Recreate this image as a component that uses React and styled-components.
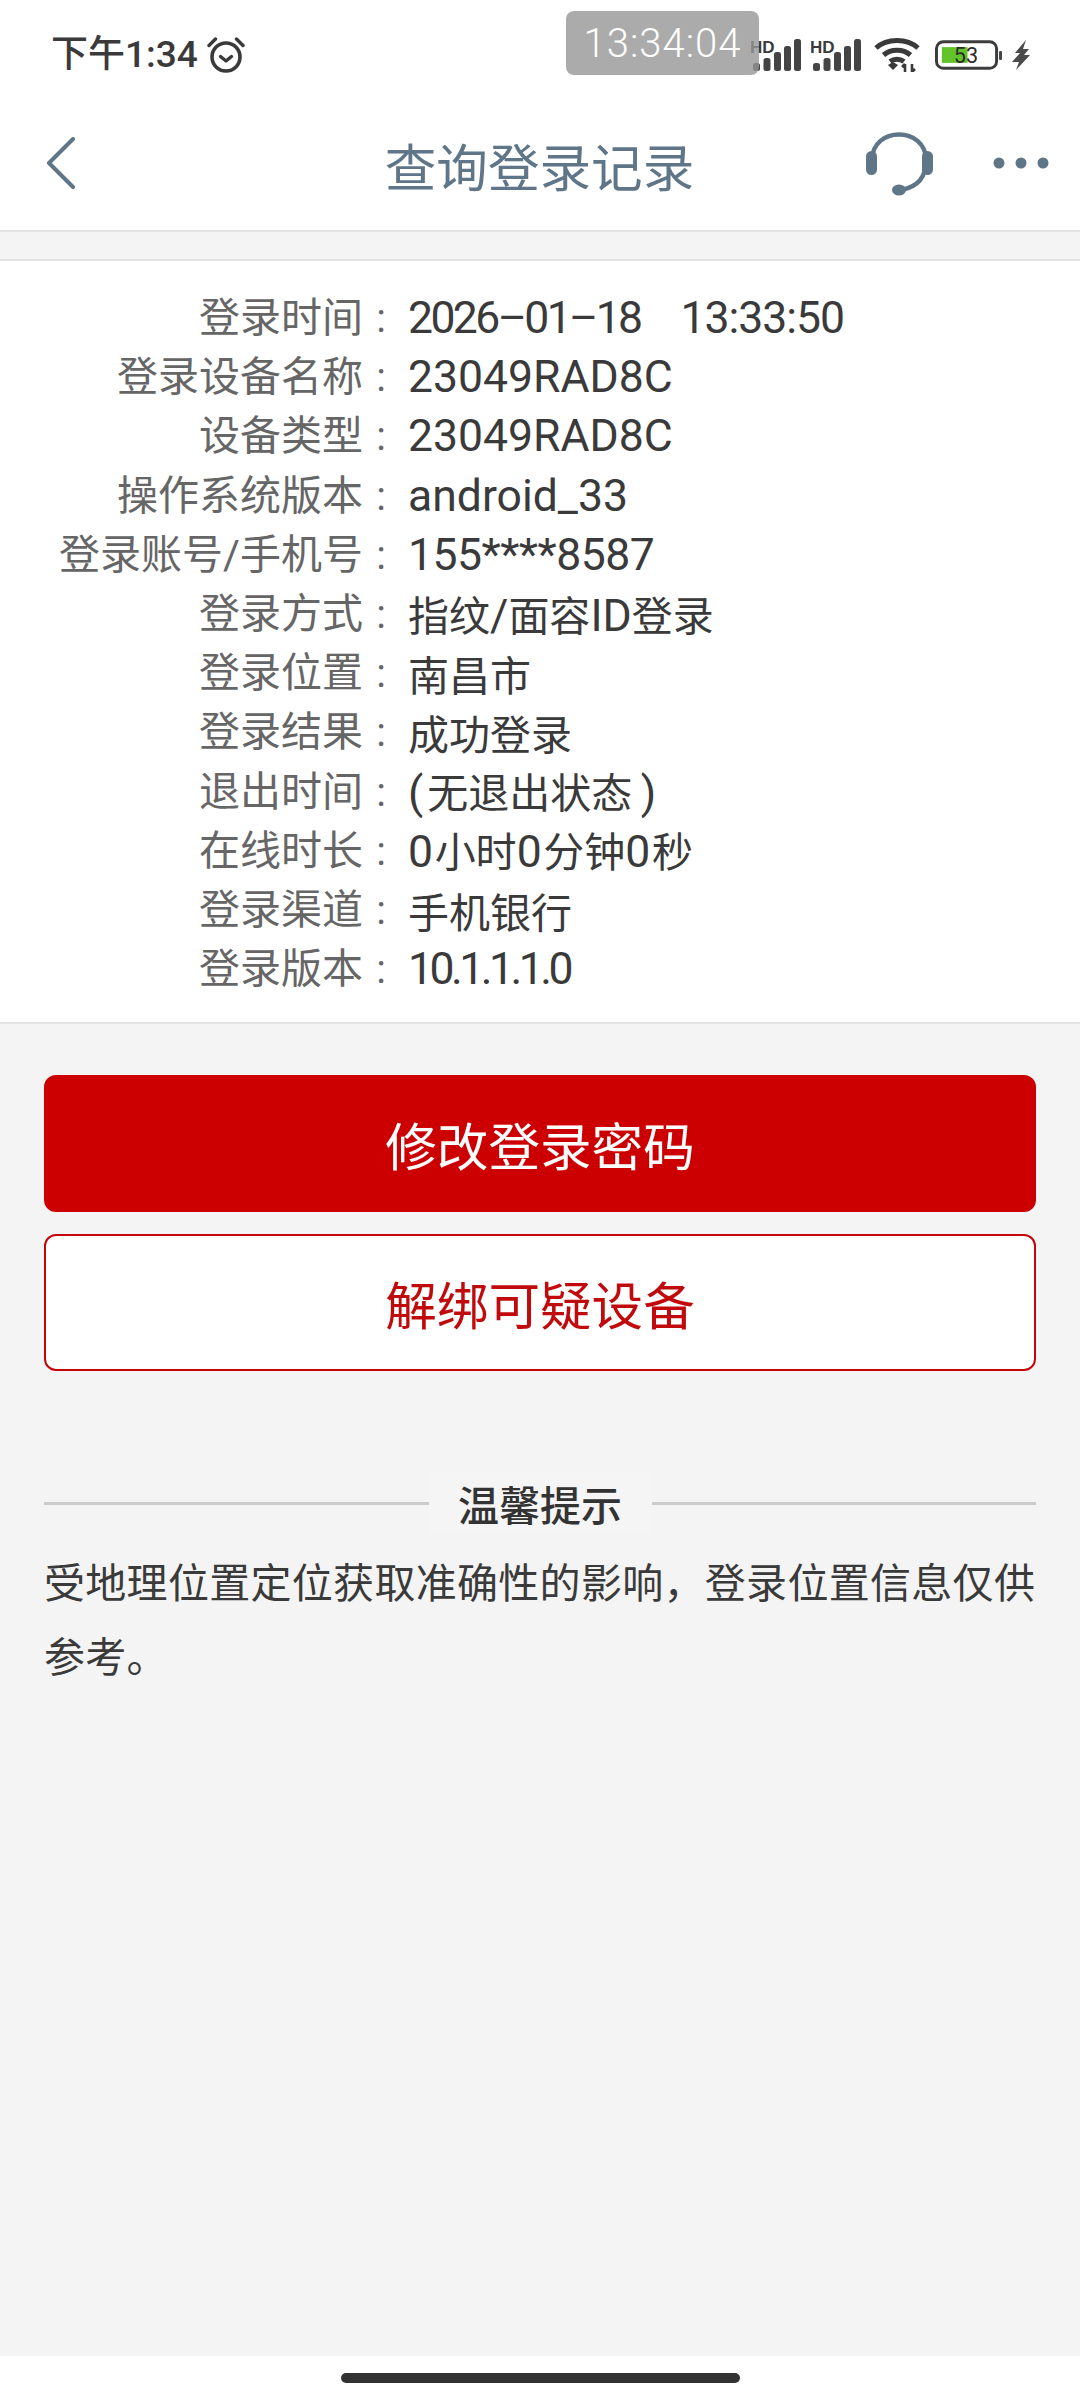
import React from "react";
import styled, { createGlobalStyle } from "styled-components";

const FONT = `Roboto, "Noto Sans CJK SC", sans-serif`;
const CJK = `"Noto Sans CJK SC", sans-serif`;

const Global = createGlobalStyle`
  html, body { margin: 0; padding: 0; background: #fff; }
  * { box-sizing: border-box; }
`;

const Page = styled.div`
  position: relative;
  width: 1080px;
  height: 2400px;
  display: flex;
  flex-direction: column;
  background: #f4f4f4;
  font-family: ${FONT};
  overflow: hidden;
`;

const StatusBar = styled.div`
  height: 100px;
  background: #fff;
  display: flex;
  align-items: flex-start;
  justify-content: space-between;
  padding: 33px 50px 0 51px;
`;
const StatusLeft = styled.div`
  display: flex;
  align-items: center;
  gap: 9px;
  height: 44px;
`;
const Clock = styled.span`
  font: 500 37px/44px ${FONT};
  color: #3a3a3a;
`;
const StatusRight = styled.div`
  display: flex;
  align-items: center;
  height: 44px;
  gap: 10px;
`;
const WifiIcon = styled.svg`
  margin: 0 5px 0 3px;
`;
const TimeBadge = styled.div`
  position: absolute;
  left: 566px;
  top: 11px;
  width: 193px;
  height: 64px;
  border-radius: 8px;
  background: rgba(150, 150, 150, 0.8);
  color: #fff;
  font: 300 40px/66px Roboto, sans-serif;
  letter-spacing: 1px;
  text-align: center;
`;

const NavBar = styled.div`
  height: 132px;
  background: #fff;
  border-bottom: 2px solid #e3e3e3;
  display: grid;
  grid-template-columns: 1fr auto 1fr;
  align-items: center;
  padding: 0 31px 0 30px;
  color: #5f7688;
`;
const NavTitle = styled.div`
  font: 400 51.6px/60px ${CJK};
  color: #5f7688;
`;
const NavActions = styled.div`
  display: flex;
  justify-content: flex-end;
  align-items: center;
  gap: 59px;
  margin-bottom: 4px;
`;
const BackIcon = styled.svg`
  display: block;
  margin-left: 16px;
  transform: translateY(-2px);
`;
const NavIcon = styled.svg`
  display: block;
`;

const Card = styled.section`
  margin-top: 27px;
  height: 765px;
  background: #fff;
  border-top: 2px solid #e3e3e3;
  border-bottom: 2px solid #e3e3e3;
  padding-top: 28px;
`;
const Row = styled.div`
  display: flex;
  height: 59.2px;
  align-items: center;
  white-space: nowrap;
`;
const Label = styled.span`
  width: 363px;
  text-align: right;
  font: 400 41px/59px ${FONT};
  color: #666;
`;
const Colon = styled.span`
  width: 36px;
  text-align: center;
  font: 400 40px/59px ${FONT};
  color: #666;
`;
const Value = styled.span`
  margin-left: 9px;
  color: #3a3a3a;
  white-space: pre;
`;
const Latin = styled.span`
  font: 400 44.5px/59px Roboto, sans-serif;
  letter-spacing: ${(p) => p.$spacing || 0}px;
`;
const Clocktime = styled(Latin)`
  margin-left: 40px;
  letter-spacing: -1px;
`;
const Han = styled.span`
  font: 400 41px/59px ${CJK};
`;

const Body = styled.main`
  flex: 1;
  padding: 51px 44px 0;
  display: flex;
  flex-direction: column;
`;
const Button = styled.button`
  display: block;
  width: 100%;
  height: 137px;
  padding: 0;
  border-radius: 12px;
  border: 2px solid #c4060a;
  background: ${(p) => (p.$primary ? "#cc0000" : "#fff")};
  border-color: ${(p) => (p.$primary ? "#cc0000" : "#c4060a")};
  color: ${(p) => (p.$primary ? "#fff" : "#c00a0c")};
  font: 400 51.6px/60px ${CJK};
  margin-bottom: 22px;
`;
const Divider = styled.div`
  margin-top: 80px;
  display: flex;
  align-items: center;
  height: 60px;
`;
const Rule = styled.div`
  flex: 1;
  height: 3px;
  background: #ccc;
`;
const DividerLabel = styled.div`
  width: 223px;
  height: 60px;
  background: #f5f5f5;
  font: 500 41px/60px ${CJK};
  color: #333;
  text-align: center;
`;
const Notice = styled.p`
  margin: 10px 0 0;
  width: 992px;
  font: 400 41px/74px ${CJK};
  letter-spacing: 0.3px;
  color: #3a3a3a;
`;

const HomeBar = styled.footer`
  height: 44px;
  background: #fff;
  display: flex;
  justify-content: center;
  padding-top: 17px;
`;
const HomePill = styled.div`
  width: 399px;
  height: 10px;
  border-radius: 5px;
  background: #333;
`;

const Alarm = () => (
  <svg width="38" height="38" viewBox="0 0 38 38" fill="none" stroke="#3a3a3a">
    <circle cx="19" cy="21" r="14" strokeWidth="3.6" />
    <path d="M13.5 20.5 19 25l5.5-4.5" strokeWidth="3.4" strokeLinecap="round" strokeLinejoin="round" />
    <path d="M2 9.5 8.5 3M36 9.5 29.5 3" strokeWidth="3.4" strokeLinecap="round" />
  </svg>
);

const Signal = () => (
  <svg width="50" height="34" viewBox="0 0 50 34">
    <text x="-1" y="15" fontFamily="Liberation Sans, sans-serif" fontWeight="700" fontSize="17" fill="#3a3a3a">HD</text>
    <g fill="#444">
      <rect x="2" y="25" width="7" height="8" rx="2.5" />
      <rect x="12.5" y="20" width="7" height="13" rx="2.5" />
      <rect x="23" y="14" width="7" height="19" rx="2.5" />
      <rect x="33" y="8" width="7" height="25" rx="2.5" />
      <rect x="43" y="1" width="7" height="32" rx="2.5" />
    </g>
  </svg>
);

const Wifi = () => (
  <WifiIcon width="46" height="34" viewBox="0 0 46 34" fill="none" stroke="#3a3a3a" strokeWidth="5">
    <path d="M2 10C13 0 33 0 44 10" />
    <path d="M9.5 17C17 10.5 29 10.5 36.5 17" />
    <path d="M16 23.5c4-3 10-3 14 0" />
    <path d="M14 27l5 5 5-5-5-3z" fill="#3a3a3a" stroke="none" />
    <path d="M31 34v-8m-3 3 3-3M38 26v8m3-3-3 3" strokeWidth="2.6" />
  </WifiIcon>
);

const Battery = () => (
  <svg width="67" height="30" viewBox="0 0 68 30">
    <rect x="1.5" y="1.5" width="61" height="27" rx="7" fill="#fff" stroke="#3c3c3c" strokeWidth="3" />
    <rect x="7" y="7" width="26" height="16" fill="#62c42a" />
    <text x="19" y="23" fontFamily="Roboto, sans-serif" fontSize="22" fill="#2b2b2b">53</text>
    <rect x="65" y="11" width="3" height="9" rx="1" fill="#444" />
  </svg>
);

const Bolt = () => (
  <svg width="18" height="30" viewBox="0 0 18 30">
    <path d="M14 0 3 13h5L0 22h7l-3 8 14-15h-6l5-6h-6z" fill="#4a4a4a" />
  </svg>
);

const rows = [
  { k: "登录时间", v: "2026–01–18", s: -2.6, time: "13:33:50" },
  { k: "登录设备名称", v: "23049RAD8C" },
  { k: "设备类型", v: "23049RAD8C" },
  { k: "操作系统版本", v: "android_33" },
  { k: "登录账号/手机号", v: "155****8587", s: -0.5 },
  { k: "登录方式", v: "指纹/面容ID登录" },
  { k: "登录位置", v: "南昌市" },
  { k: "登录结果", v: "成功登录" },
  { k: "退出时间", v: "(无退出状态\u200a)", s: 4 },
  { k: "在线时长", v: "0小时0分钟0秒", s: 1.6 },
  { k: "登录渠道", v: "手机银行" },
  { k: "登录版本", v: "10.1.1.1.0", s: -3.5 },
];

const Runs = ({ text, spacing }) =>
  text.split(/([\u4e00-\u9fff]+)/).filter(Boolean).map((part, i) =>
    /[\u4e00-\u9fff]/.test(part) ? (
      <Han key={i}>{part}</Han>
    ) : (
      <Latin key={i} $spacing={spacing}>{part}</Latin>
    )
  );

export default function App() {
  return (
    <Page>
      <Global />
      <StatusBar>
        <StatusLeft>
          <Clock>下午1:34</Clock>
          <Alarm />
        </StatusLeft>
        <StatusRight>
          <Signal />
          <Signal />
          <Wifi />
          <Battery />
          <Bolt />
        </StatusRight>
      </StatusBar>
      <TimeBadge>13:34:04</TimeBadge>
      <NavBar>
        <BackIcon width="30" height="52" viewBox="0 0 30 52" fill="none" stroke="#5f7688" strokeWidth="4" strokeLinecap="round" strokeLinejoin="round">
          <path d="M27 2 3 26l24 24" />
        </BackIcon>
        <NavTitle>查询登录记录</NavTitle>
        <NavActions>
          <NavIcon width="68" height="66" viewBox="0 0 68 66" fill="none">
            <path d="M6 30C6 -4 60 -4 60 30C60 48 52 56 36 60" stroke="#5f7688" strokeWidth="4.5" />
            <rect x="0" y="21" width="11" height="24" rx="5.5" fill="#5f7688" />
            <rect x="56" y="21" width="11" height="24" rx="5.5" fill="#5f7688" />
            <ellipse cx="33" cy="60" rx="7" ry="5.5" fill="#5f7688" />
          </NavIcon>
          <NavIcon width="56" height="12" viewBox="0 0 56 12" fill="#5f7688">
            <circle cx="6" cy="6" r="5.5" />
            <circle cx="28" cy="6" r="5.5" />
            <circle cx="50" cy="6" r="5.5" />
          </NavIcon>
        </NavActions>
      </NavBar>
      <Card>
        {rows.map((r) => (
          <Row key={r.k}>
            <Label>{r.k}</Label>
            <Colon>:</Colon>
            <Value>
              <Runs text={r.v} spacing={r.s} />
              {r.time && <Clocktime>{r.time}</Clocktime>}
            </Value>
          </Row>
        ))}
      </Card>
      <Body>
        <Button $primary>修改登录密码</Button>
        <Button>解绑可疑设备</Button>
        <Divider>
          <Rule />
          <DividerLabel>温馨提示</DividerLabel>
          <Rule />
        </Divider>
        <Notice>受地理位置定位获取准确性的影响，登录位置信息仅供参考。</Notice>
      </Body>
      <HomeBar>
        <HomePill />
      </HomeBar>
    </Page>
  );
}
